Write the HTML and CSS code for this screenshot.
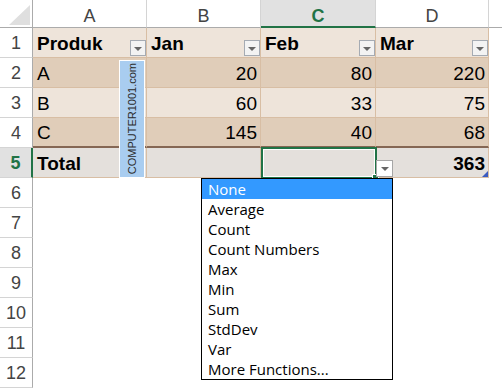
FILE: index.html
```html
<!DOCTYPE html>
<html>
<head>
<meta name="viewport" content="width=device-width, initial-scale=1">
<link rel="stylesheet" href="styles.css">
</head>
<body>

<div class="sheet">
  <div class="corner"><svg width="32" height="27"><polygon points="30,5 30,25 9,25" fill="#dfdfdf"/></svg></div>
  <div class="col-head">A</div>
  <div class="col-head">B</div>
  <div class="col-head col-active">C</div>
  <div class="col-head">D</div>
  <div class="col-head col-rest"></div>

  <div class="row-head">1</div>
  <div class="cell th"><span>Produk</span><span class="filter"></span></div>
  <div class="cell th"><span>Jan</span><span class="filter"></span></div>
  <div class="cell th"><span>Feb</span><span class="filter"></span></div>
  <div class="cell th"><span>Mar</span><span class="filter"></span></div>
  <div class="blank"></div>

  <div class="row-head">2</div>
  <div class="cell band"><span>A</span></div>
  <div class="cell band num"><span>20</span></div>
  <div class="cell band num"><span>80</span></div>
  <div class="cell band num"><span>220</span></div>
  <div class="blank"></div>

  <div class="row-head">3</div>
  <div class="cell"><span>B</span></div>
  <div class="cell num"><span>60</span></div>
  <div class="cell num"><span>33</span></div>
  <div class="cell num"><span>75</span></div>
  <div class="blank"></div>

  <div class="row-head">4</div>
  <div class="cell band last"><span>C</span></div>
  <div class="cell band last num"><span>145</span></div>
  <div class="cell band last num"><span>40</span></div>
  <div class="cell band last num"><span>68</span></div>
  <div class="blank"></div>

  <div class="row-head row-active">5</div>
  <div class="cell total bold"><span>Total</span></div>
  <div class="cell total"></div>
  <div class="cell total"></div>
  <div class="cell total num bold end"><span>363</span><span class="mark"></span></div>
  <div class="blank"></div>

  <div class="row-head">6</div><div class="empty"></div>
  <div class="row-head">7</div><div class="empty"></div>
  <div class="row-head">8</div><div class="empty"></div>
  <div class="row-head">9</div><div class="empty"></div>
  <div class="row-head">10</div><div class="empty"></div>
  <div class="row-head">11</div><div class="empty"></div>
  <div class="row-head">12</div><div class="empty"></div>

  <div class="wm"><span>COMPUTER1001.com</span></div>
  <div class="sel"></div>
  <div class="handle"></div>
  <div class="cbtn"></div>

  <div class="list">
    <div class="on">None</div>
    <div>Average</div>
    <div>Count</div>
    <div>Count Numbers</div>
    <div>Max</div>
    <div>Min</div>
    <div>Sum</div>
    <div>StdDev</div>
    <div>Var</div>
    <div>More Functions...</div>
  </div>
</div>

</body>
</html>
```

FILE: styles.css
```css
* {
  box-sizing: border-box;
}

body {
  margin: 0;
  background: #fff;
}

.sheet {
  position: relative;
  display: grid;
  grid-template-columns: 33px 114px 114px 115px 113px 13px;
  grid-template-rows: 28px repeat(12, 30px);
  font-family: "Liberation Sans", Arial, sans-serif;
}

.corner {
  border-right: 1px solid #ababab;
  border-bottom: 1px solid #ababab;
}

.corner svg {
  display: block;
}

.col-head {
  border-right: 1px solid #d4d4d4;
  border-bottom: 1px solid #ababab;
  text-align: center;
  font-size: 18px;
  color: #444;
  padding-top: 5px;
  line-height: 22px;
}

.col-active {
  background: #e1e1e1;
  border-bottom: 2px solid #217346;
  color: #217346;
  font-weight: bold;
}

.col-rest {
  border-right: none;
}

.row-head {
  border-right: 1px solid #ababab;
  border-bottom: 1px solid #d4d4d4;
  text-align: center;
  font-size: 18px;
  color: #444;
  padding-top: 1px;
  line-height: 28px;
}

.row-active {
  background: #e1e1e1;
  color: #217346;
  font-weight: bold;
  border-right: 2px solid #217346;
}

.empty {
  grid-column: span 5;
}

.cell {
  display: flex;
  justify-content: space-between;
  align-items: flex-end;
  padding: 0 3px 0 4px;
  font-size: 19px;
  line-height: 26px;
  color: #000;
  background: #eee4da;
  border-right: 1px solid #d8bea4;
  border-bottom: 1px solid #d8bea4;
}

.cell.th {
  font-weight: bold;
  padding-right: 0;
}

.cell.band {
  background: #e0cdb9;
}

.cell.last {
  border-bottom: 2px solid #856754;
}

.cell.total {
  background: #e4e0dc;
}

.cell.num {
  justify-content: flex-end;
}

.cell.bold {
  font-weight: bold;
}

.cell.end {
  position: relative;
}

.filter {
  display: flex;
  align-items: center;
  justify-content: center;
  flex: none;
  width: 16px;
  height: 16px;
  margin-bottom: 1px;
  border: 1px solid #a5abb3;
  background: #f3f3f3;
}

.filter::after,
.cbtn::after {
  content: "";
  border-left: 4px solid transparent;
  border-right: 4px solid transparent;
  border-top: 4px solid #666;
  margin-top: 1px;
}

.mark {
  position: absolute;
  right: 0;
  bottom: 0;
  border-left: 6px solid transparent;
  border-bottom: 6px solid #3c5cc0;
}

.wm {
  position: absolute;
  left: 119px;
  top: 60px;
  width: 26px;
  height: 118px;
  background: #a9cdf0;
  border: 1px solid #fff;
  display: flex;
  align-items: center;
  justify-content: center;
}

.wm span {
  writing-mode: vertical-rl;
  transform: rotate(180deg);
  font-size: 11px;
  color: #2b2b2b;
}

.sel {
  position: absolute;
  left: 261px;
  top: 147px;
  width: 116px;
  height: 32px;
  border: 2px solid #217346;
  box-shadow: inset 0 0 0 1px #fff;
}

.handle {
  position: absolute;
  left: 372px;
  top: 174px;
  width: 7px;
  height: 7px;
  background: #217346;
  border: 1px solid #fff;
}

.cbtn {
  position: absolute;
  left: 376px;
  top: 160px;
  width: 17px;
  height: 17px;
  border: 1px solid #a6a6a6;
  background: #fff;
  display: flex;
  align-items: center;
  justify-content: center;
}

.list {
  position: absolute;
  left: 201px;
  top: 178px;
  width: 192px;
  border: 1px solid #000;
  background: #fff;
  font-family: "Open Sans", sans-serif;
  font-size: 15px;
  line-height: 20px;
  color: #000;
}

.list div {
  height: 20px;
  padding-left: 6px;
}

.list .on {
  background: #3399ff;
  color: #fff;
}
```
